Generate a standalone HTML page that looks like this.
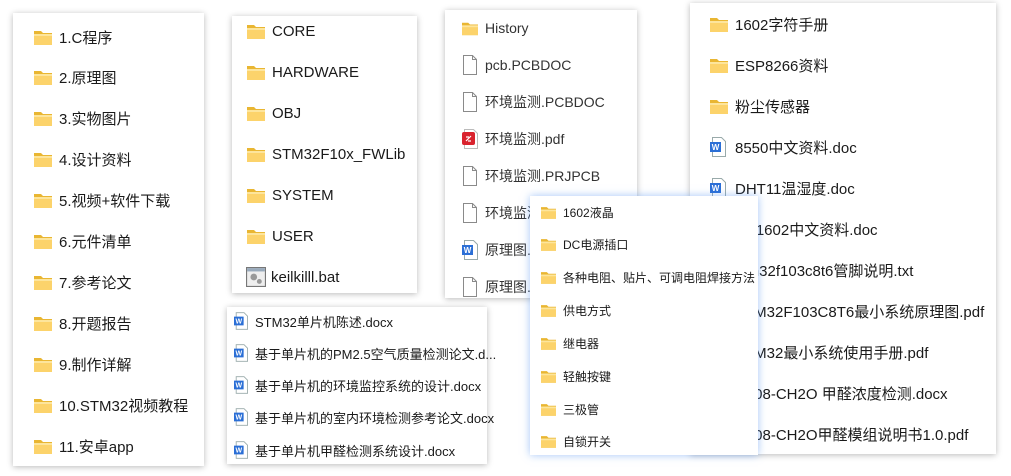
<!DOCTYPE html>
<html><head><meta charset="utf-8"><style>
body{margin:0;width:1011px;height:476px;background:#fff;position:relative;overflow:hidden;font-family:"Liberation Sans","Noto Sans CJK SC",sans-serif;color:#1a1a1a}
.p{position:absolute;background:#fff;box-shadow:0 1px 6px rgba(0,0,0,.28)}
.r{position:absolute;display:flex;align-items:center;white-space:nowrap;height:24px}
.r svg{flex:none}
.f{width:18px;height:15px;margin-right:7px}
.fs{width:15px;height:13px;margin-right:7px}
.d{width:16px;height:20px;margin-right:7px}
</style></head><body>
<svg width="0" height="0" style="position:absolute"><defs>
<symbol id="fo" viewBox="0 0 18 15"><path d="M0 1h7l2 2h9v12H0z" fill="#e9b632"/><rect x="0" y="4" width="18" height="11" fill="#fcd36b"/><rect x="0" y="4" width="18" height="2" fill="#fde59c"/></symbol>
<symbol id="fi" viewBox="0 0 16 20"><path d="M1.5 .5h9l4 4v15h-13z" fill="#fff" stroke="#8a8a8a"/><path d="M10.5 .5v4h4" fill="none" stroke="#8a8a8a"/></symbol>
<symbol id="wd" viewBox="0 0 16 20"><path d="M2.5 .5h9l4 4v15h-13z" fill="#fff" stroke="#9aa"/><rect x="0" y="5" width="11" height="10" fill="#2b6fd6"/><text x="5.5" y="13" font-size="8" fill="#fff" text-anchor="middle" font-family="Liberation Sans" font-weight="bold">W</text></symbol>
<symbol id="pd" viewBox="0 0 16 20"><path d="M2.5 .5h9l4 4v15h-13z" fill="#fff" stroke="#bbb"/><rect x="0" y="3" width="13" height="13" rx="2" fill="#d9232e"/><path d="M4 12l5-5M4 8h3M6 12h3" stroke="#fff" stroke-width="1.2"/></symbol>
<symbol id="bt" viewBox="0 0 18 18"><rect x=".5" y=".5" width="17" height="17" fill="#eee" stroke="#777"/><rect x="1" y="1" width="16" height="3" fill="#9ab"/><circle cx="7" cy="9" r="3" fill="#999"/><circle cx="12" cy="13" r="2.2" fill="#999"/></symbol>
</defs></svg>

<div class="p" style="left:13px;top:13px;width:191px;height:453px"></div>
<div style="font-size:15px">
<div class="r" style="left:34px;top:25px"><svg class="f"><use href="#fo"/></svg>1.C程序</div>
<div class="r" style="left:34px;top:65px"><svg class="f"><use href="#fo"/></svg>2.原理图</div>
<div class="r" style="left:34px;top:106px"><svg class="f"><use href="#fo"/></svg>3.实物图片</div>
<div class="r" style="left:34px;top:147px"><svg class="f"><use href="#fo"/></svg>4.设计资料</div>
<div class="r" style="left:34px;top:188px"><svg class="f"><use href="#fo"/></svg>5.视频+软件下载</div>
<div class="r" style="left:34px;top:229px"><svg class="f"><use href="#fo"/></svg>6.元件清单</div>
<div class="r" style="left:34px;top:270px"><svg class="f"><use href="#fo"/></svg>7.参考论文</div>
<div class="r" style="left:34px;top:311px"><svg class="f"><use href="#fo"/></svg>8.开题报告</div>
<div class="r" style="left:34px;top:352px"><svg class="f"><use href="#fo"/></svg>9.制作详解</div>
<div class="r" style="left:34px;top:393px"><svg class="f"><use href="#fo"/></svg>10.STM32视频教程</div>
<div class="r" style="left:34px;top:434px"><svg class="f"><use href="#fo"/></svg>11.安卓app</div>
</div>

<div class="p" style="left:232px;top:16px;width:185px;height:277px"></div>
<div style="font-size:15px">
<div class="r" style="left:247px;top:19px"><svg class="f"><use href="#fo"/></svg>CORE</div>
<div class="r" style="left:247px;top:60px"><svg class="f"><use href="#fo"/></svg>HARDWARE</div>
<div class="r" style="left:247px;top:101px"><svg class="f"><use href="#fo"/></svg>OBJ</div>
<div class="r" style="left:247px;top:142px"><svg class="f"><use href="#fo"/></svg>STM32F10x_FWLib</div>
<div class="r" style="left:247px;top:183px"><svg class="f"><use href="#fo"/></svg>SYSTEM</div>
<div class="r" style="left:247px;top:224px"><svg class="f"><use href="#fo"/></svg>USER</div>
<div class="r" style="left:246px;top:265px"><svg style="width:20px;height:20px;margin-right:5px"><use href="#bt"/></svg>keilkilll.bat</div>
</div>

<div class="p" style="left:445px;top:10px;width:192px;height:288px"></div>
<div style="font-size:14px;color:#333">
<div class="r" style="left:462px;top:16px"><svg class="f" style="width:16px;margin-right:7px"><use href="#fo"/></svg>History</div>
<div class="r" style="left:462px;top:53px"><svg class="d"><use href="#fi"/></svg>pcb.PCBDOC</div>
<div class="r" style="left:462px;top:90px"><svg class="d"><use href="#fi"/></svg>环境监测.PCBDOC</div>
<div class="r" style="left:462px;top:127px"><svg class="d"><use href="#pd"/></svg>环境监测.pdf</div>
<div class="r" style="left:462px;top:164px"><svg class="d"><use href="#fi"/></svg>环境监测.PRJPCB</div>
<div class="r" style="left:462px;top:201px"><svg class="d"><use href="#fi"/></svg>环境监测.SchDoc</div>
<div class="r" style="left:462px;top:238px"><svg class="d"><use href="#wd"/></svg>原理图.doc</div>
<div class="r" style="left:462px;top:275px"><svg class="d"><use href="#fi"/></svg>原理图.SchDoc</div>
</div>

<div class="p" style="left:690px;top:3px;width:306px;height:451px"></div>
<div style="font-size:15px">
<div class="r" style="left:710px;top:12px"><svg class="f"><use href="#fo"/></svg>1602字符手册</div>
<div class="r" style="left:710px;top:53px"><svg class="f"><use href="#fo"/></svg>ESP8266资料</div>
<div class="r" style="left:710px;top:94px"><svg class="f"><use href="#fo"/></svg>粉尘传感器</div>
<div class="r" style="left:710px;top:135px"><svg class="d" style="margin-right:9px"><use href="#wd"/></svg>8550中文资料.doc</div>
<div class="r" style="left:710px;top:176px"><svg class="d" style="margin-right:9px"><use href="#wd"/></svg>DHT11温湿度.doc</div>
<div class="r" style="left:710px;top:217px"><svg class="d" style="margin-right:9px"><use href="#wd"/></svg>LM1602中文资料.doc</div>
<div class="r" style="left:710px;top:258px"><svg class="d" style="margin-right:9px"><use href="#fi"/></svg>stm32f103c8t6管脚说明.txt</div>
<div class="r" style="left:710px;top:299px"><svg class="d" style="margin-right:9px"><use href="#pd"/></svg>STM32F103C8T6最小系统原理图.pdf</div>
<div class="r" style="left:710px;top:340px"><svg class="d" style="margin-right:9px"><use href="#pd"/></svg>STM32最小系统使用手册.pdf</div>
<div class="r" style="left:710px;top:381px"><svg class="d" style="margin-right:9px"><use href="#wd"/></svg>ZE08-CH2O 甲醛浓度检测.docx</div>
<div class="r" style="left:710px;top:422px"><svg class="d" style="margin-right:9px"><use href="#pd"/></svg>ZE08-CH2O甲醛模组说明书1.0.pdf</div>
</div>

<div class="p" style="left:227px;top:307px;width:260px;height:157px"></div>
<div style="font-size:13px">
<div class="r" style="left:234px;top:309px"><svg class="d" style="width:14px;height:18px;margin-right:7px"><use href="#wd"/></svg>STM32单片机陈述.docx</div>
<div class="r" style="left:234px;top:341px"><svg class="d" style="width:14px;height:18px;margin-right:7px"><use href="#wd"/></svg>基于单片机的PM2.5空气质量检测论文.d...</div>
<div class="r" style="left:234px;top:373px"><svg class="d" style="width:14px;height:18px;margin-right:7px"><use href="#wd"/></svg>基于单片机的环境监控系统的设计.docx</div>
<div class="r" style="left:234px;top:405px"><svg class="d" style="width:14px;height:18px;margin-right:7px"><use href="#wd"/></svg>基于单片机的室内环境检测参考论文.docx</div>
<div class="r" style="left:234px;top:438px"><svg class="d" style="width:14px;height:18px;margin-right:7px"><use href="#wd"/></svg>基于单片机甲醛检测系统设计.docx</div>
</div>

<div class="p" style="left:530px;top:196px;width:228px;height:259px;box-shadow:0 0 8px rgba(90,150,240,.55)"></div>
<div style="font-size:12px">
<div class="r" style="left:541px;top:200px"><svg class="fs"><use href="#fo"/></svg>1602液晶</div>
<div class="r" style="left:541px;top:232px"><svg class="fs"><use href="#fo"/></svg>DC电源插口</div>
<div class="r" style="left:541px;top:265px"><svg class="fs"><use href="#fo"/></svg>各种电阻、贴片、可调电阻焊接方法</div>
<div class="r" style="left:541px;top:298px"><svg class="fs"><use href="#fo"/></svg>供电方式</div>
<div class="r" style="left:541px;top:331px"><svg class="fs"><use href="#fo"/></svg>继电器</div>
<div class="r" style="left:541px;top:364px"><svg class="fs"><use href="#fo"/></svg>轻触按键</div>
<div class="r" style="left:541px;top:397px"><svg class="fs"><use href="#fo"/></svg>三极管</div>
<div class="r" style="left:541px;top:429px"><svg class="fs"><use href="#fo"/></svg>自锁开关</div>
</div>
</body></html>
